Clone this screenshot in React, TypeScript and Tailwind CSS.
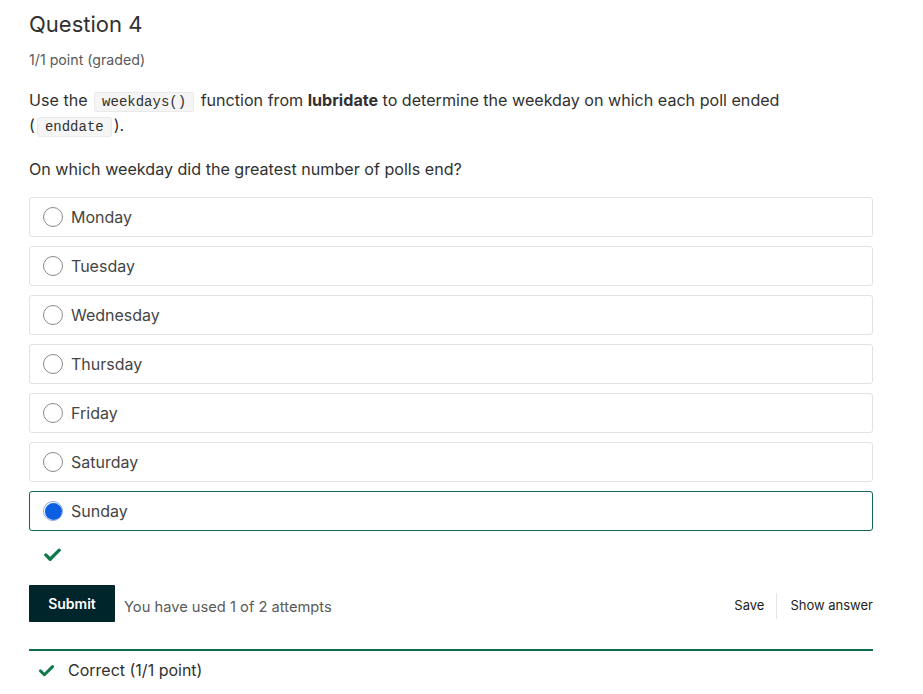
import React from 'react';

const options = ['Monday', 'Tuesday', 'Wednesday', 'Thursday', 'Friday', 'Saturday', 'Sunday'];

const Check = ({ className = '' }: { className?: string }) => (
  <svg viewBox="0 0 24 24" className={className} fill="none" stroke="currentColor" strokeWidth={4.2} strokeLinecap="round" strokeLinejoin="round">
    <path d="M3.5 12.5 9 18 20.5 6.5" />
  </svg>
);

export default function App() {
  const selected = 'Sunday';

  return (
    <div className="min-h-screen bg-white pl-[29px] pr-[50px] pt-[10px] text-[#454545] font-['Inter',sans-serif]">
      <h3 className="text-[22px] leading-[28px] text-[#313131]">Question 4</h3>
      <div className="mt-[12px] text-[14.2px] leading-[20px] text-[#5a5a5a]">1/1 point (graded)</div>

      <p className="mt-[18px] text-[16.1px] leading-[25px] text-[#313131]">
        Use the{' '}
        <code className="mx-[2px] rounded-[3px] border border-[#eaeaea] bg-[#f5f5f5] px-[7px] py-[1px] font-['Liberation_Mono',monospace] text-[14px] leading-[16px] text-[#313131]">
          weekdays()
        </code>{' '}
        function from <strong className="font-bold">lubridate</strong> to determine the weekday on which each poll ended
        <br />(
        <code className="mx-[2px] rounded-[3px] border border-[#eaeaea] bg-[#f5f5f5] px-[7px] py-[1px] font-['Liberation_Mono',monospace] text-[14px] leading-[16px] text-[#313131]">
          enddate
        </code>
        ).
      </p>

      <p className="mt-[19px] text-[16.1px] leading-[25px] text-[#313131]">On which weekday did the greatest number of polls end?</p>

      <div className="mt-[15px] flex flex-col gap-[9px]">
        {options.map((opt) => {
          const isSel = opt === selected;
          return (
            <label
              key={opt}
              className={`flex h-[40px] items-center rounded-[3px] border pl-[13px] ${
                isSel ? 'border-[#0d6854]' : 'border-[#e2e2e2]'
              }`}
            >
              {isSel ? (
                <span className="flex h-[20px] w-[20px] items-center justify-center rounded-full border border-[#8aa6e8] bg-white">
                  <span className="h-[17px] w-[17px] rounded-full bg-[#0b5fe0]" />
                </span>
              ) : (
                <span className="h-[20px] w-[20px] rounded-full border border-[#8a8a8a] bg-white" />
              )}
              <span className="ml-[8px] text-[16px] text-[#454545]">{opt}</span>
            </label>
          );
        })}
      </div>

      <div className="mt-[14px] pl-[14px] text-[#0d7a4c]">
        <Check className="h-[19px] w-[19px]" />
      </div>

      <div className="mt-[21px] flex items-center">
        <button className="h-[37px] w-[86px] rounded-[1px] bg-[#00262b] text-[14px] font-semibold text-white">Submit</button>
        <span className="ml-[9px] mt-[8px] text-[14.7px] text-[#5a5a5a]">You have used 1 of 2 attempts</span>
        <div className="ml-auto mt-[4px] flex items-center text-[13px] text-[#1e1e1e]">
          <span className="pr-[12px]">Save</span>
          <span className="h-[26px] w-px bg-[#e5e5e5]" />
          <span className="pl-[13px]">Show answer</span>
        </div>
      </div>

      <div className="mt-[27px] border-t-[2px] border-[#0d6d4e] pt-[7px] flex items-center pl-[9px]">
        <Check className="h-[17px] w-[17px] text-[#0d7a4c]" />
        <span className="ml-[13px] text-[16px] text-[#313131]">Correct (1/1 point)</span>
      </div>
    </div>
  );
}
